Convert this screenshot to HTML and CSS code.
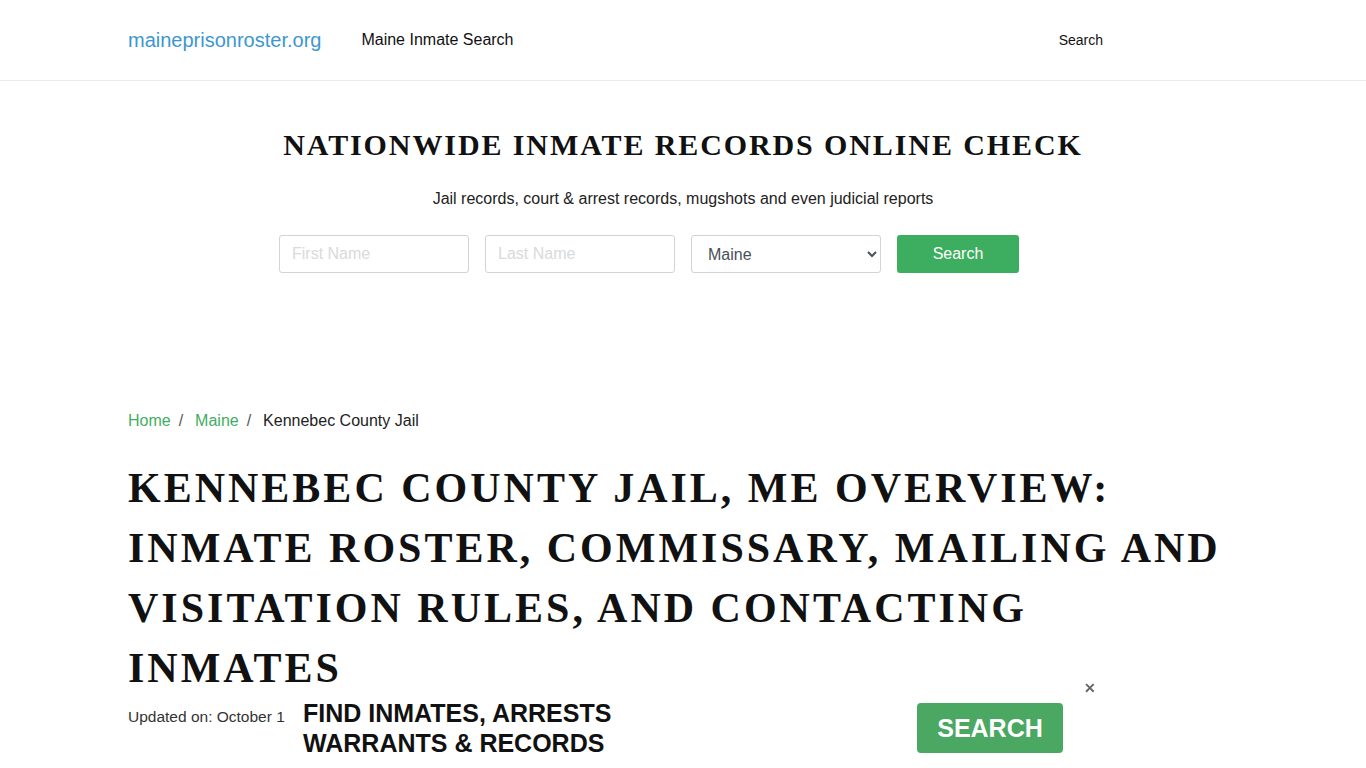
FILE: index.html
```html
<!DOCTYPE html>
<html lang="en">
<head>
<meta charset="utf-8">
<title>Kennebec County Jail, ME</title>
<link rel="stylesheet" href="styles.css">
</head>
<body>
<header class="site-header">
  <div class="container nav">
    <a class="brand" href="#">maineprisonroster.org</a>
    <a class="nav-link" href="#">Maine Inmate Search</a>
    <a class="nav-search" href="#">Search</a>
  </div>
</header>

<section class="hero">
  <h2 class="hero-title">Nationwide Inmate Records Online Check</h2>
  <p class="hero-sub">Jail records, court &amp; arrest records, mugshots and even judicial reports</p>
  <div class="container">
    <form class="search-form">
      <input class="field" type="text" placeholder="First Name">
      <input class="field" type="text" placeholder="Last Name">
      <select class="field select"><option>Maine</option></select>
      <button class="btn-search" type="button">Search</button>
    </form>
  </div>
</section>

<main class="container content">
  <nav class="breadcrumb">
    <a href="#">Home</a><span class="sep">/</span>
    <a href="#">Maine</a><span class="sep">/</span>
    <span class="current">Kennebec County Jail</span>
  </nav>
  <h1 class="page-title">Kennebec County Jail, ME Overview: Inmate Roster, Commissary, Mailing and Visitation Rules, and Contacting Inmates</h1>
  <p class="updated">Updated on: October 1, 2024</p>
</main>

<div class="ad-bar">
  <div class="ad-text">FIND INMATES, ARRESTS<br>WARRANTS &amp; RECORDS</div>
  <a class="ad-btn" href="#">SEARCH</a>
  <span class="ad-close">&#x2715;</span>
</div>
</body>
</html>
```

FILE: styles.css
```css
* { box-sizing: border-box; }
html, body { margin: 0; padding: 0; }
body {
  font-family: "Liberation Sans", Arial, sans-serif;
  color: #212529;
  background: #fff;
  font-size: 16px;
}
a { text-decoration: none; }
.container {
  width: 1110px;
  margin: 0 auto;
}
.site-header {
  border-bottom: 1px solid #ececec;
  height: 81px;
}
.nav {
  display: flex;
  align-items: center;
  height: 80px;
}
.brand {
  color: #3d97cf;
  font-size: 20px;
  margin-top: 1px;
}
.nav-link {
  color: #111;
  font-size: 16px;
  margin-left: 40px;
  margin-top: -1px;
}
.nav-search {
  color: #111;
  font-size: 14px;
  margin-left: auto;
  margin-right: 135px;
}
.hero {
  text-align: center;
  padding-top: 46px;
  height: 330px;
}
.hero-title {
  font-family: "Liberation Serif", "Times New Roman", serif;
  font-weight: bold;
  text-transform: uppercase;
  font-size: 30px;
  letter-spacing: 1.9px;
  margin: 0;
  line-height: 36px;
  color: #111;
}
.hero-sub {
  margin: 26px 0 0;
  font-size: 16px;
  line-height: 20px;
  color: #222;
}
.search-form {
  display: flex;
  gap: 16px;
  margin: 26px 0 0 151px;
}
.field {
  width: 190px;
  height: 38px;
  border: 1px solid #ced4da;
  border-radius: 3px;
  padding: 0 12px;
  font-family: "Liberation Sans", Arial, sans-serif;
  font-size: 16px;
  color: #495057;
  background: #fff;
}
.field::placeholder { color: #d8dadc; }
.select { padding-left: 12px; }
.btn-search {
  width: 122px;
  height: 38px;
  border: 0;
  border-radius: 3px;
  background: #3dae5f;
  color: #fff;
  font-family: "Liberation Sans", Arial, sans-serif;
  font-size: 16px;
}
.breadcrumb {
  font-size: 16px;
  line-height: 20px;
}
.breadcrumb a { color: #3fae61; }
.breadcrumb .sep { color: #555; margin: 0 7.5px 0 8px; }
.breadcrumb .current { color: #222; }
.page-title {
  font-family: "Liberation Serif", "Times New Roman", serif;
  font-weight: bold;
  text-transform: uppercase;
  font-size: 42px;
  letter-spacing: 3px;
  line-height: 60px;
  color: #111;
  margin: 27px 0 0;
}
.updated {
  margin: 10px 0 0;
  font-size: 15.5px;
  color: #333;
}
.ad-bar {
  position: fixed;
  left: 285px;
  bottom: 0;
  width: 818px;
  height: 74px;
  background: #fff;
  display: flex;
  align-items: center;
}
.ad-text {
  font-weight: bold;
  font-size: 25px;
  line-height: 30px;
  color: #111;
  margin-left: 18px;
  margin-top: -6px;
}
.ad-btn {
  margin-left: auto;
  margin-right: 40px;
  margin-top: -6px;
  width: 146px;
  height: 50px;
  background: #4aa862;
  border-radius: 4px;
  color: #fff;
  font-weight: bold;
  font-size: 25px;
  display: flex;
  align-items: center;
  justify-content: center;
}
.ad-close {
  position: absolute;
  right: 7px;
  top: -14px;
  color: #666;
  font-size: 14px;
  font-weight: bold;
}
```
